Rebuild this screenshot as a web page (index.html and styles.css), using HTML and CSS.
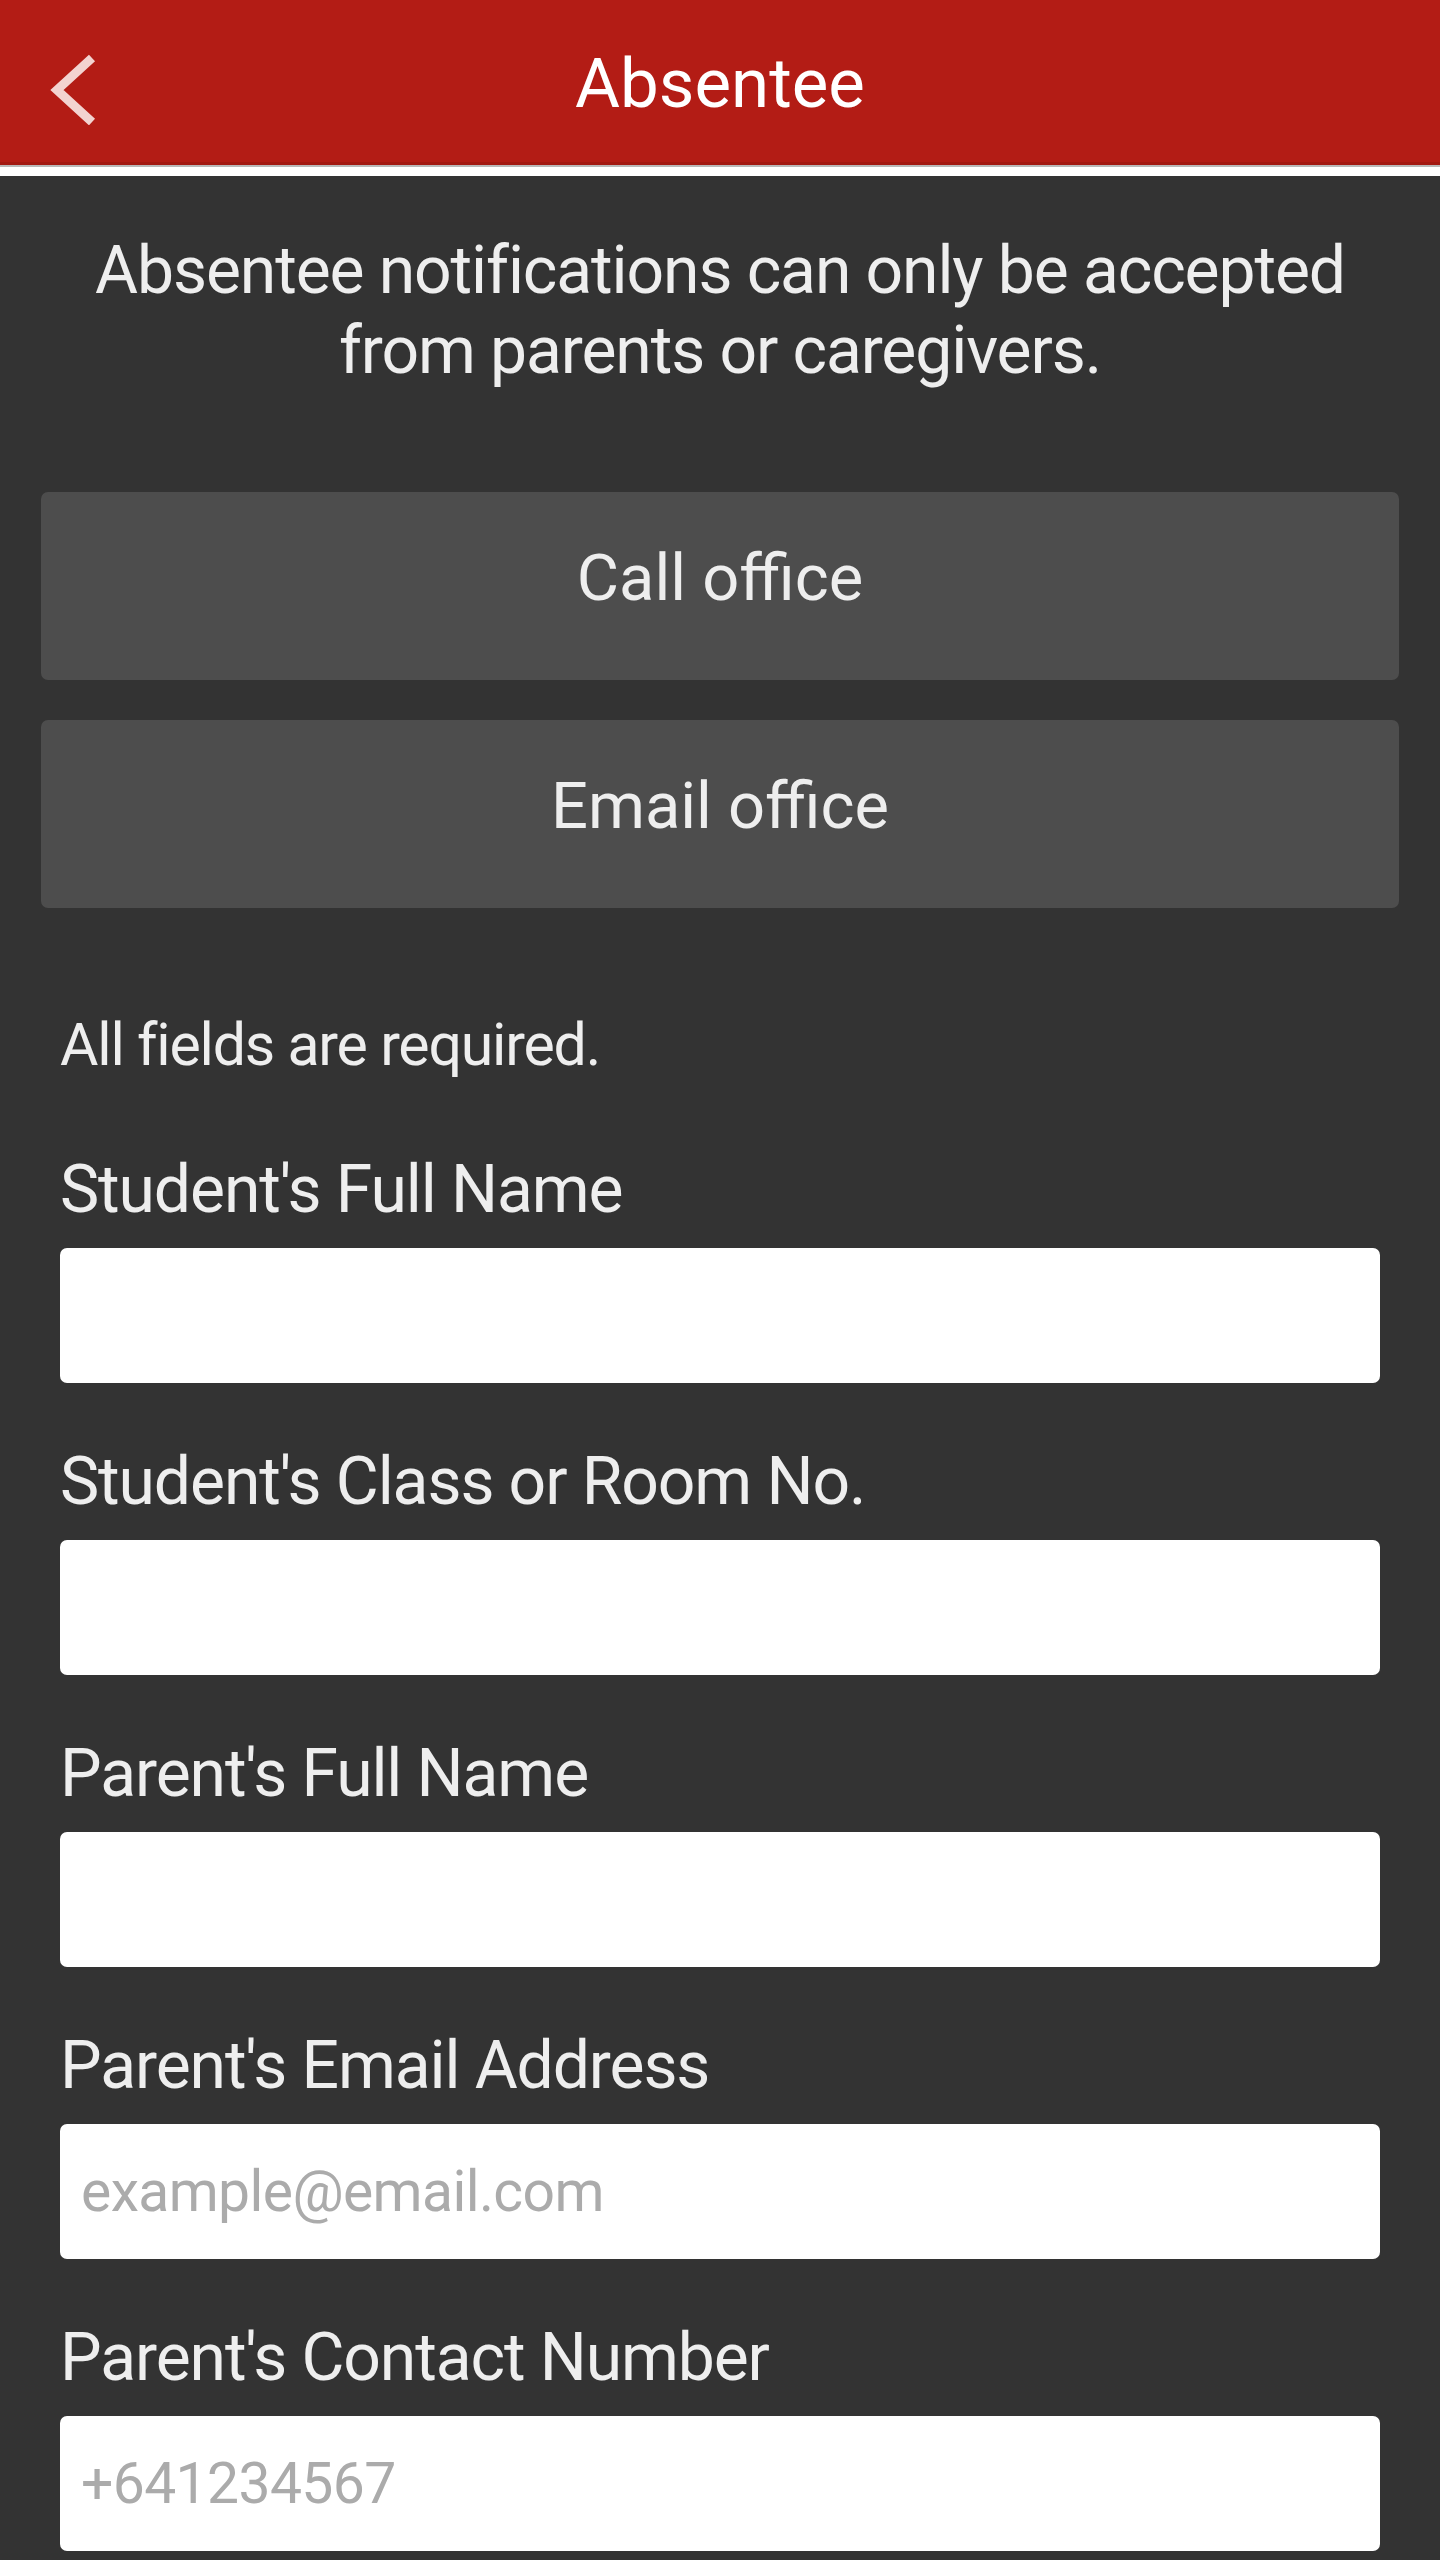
FILE: index.html
```html
<!DOCTYPE html>
<html lang="en">
<head>
<meta charset="utf-8">
<title>Absentee</title>
<link rel="stylesheet" href="styles.css">
</head>
<body>
<header class="topbar">
  <button class="back" type="button" aria-label="Back">
    <svg width="60" height="80" viewBox="0 0 60 80"><polyline points="42,13 7,45 42,77" fill="none" stroke="#f3d3d0" stroke-width="9"/></svg>
  </button>
  <h1 class="title">Absentee</h1>
</header>
<div class="rule"></div>
<main class="content">
  <p class="intro">Absentee notifications can only be accepted from parents or caregivers.</p>
  <div class="actions">
    <button class="action" type="button">Call office</button>
    <button class="action" type="button">Email office</button>
  </div>
  <form class="form">
    <p class="note">All fields are required.</p>
    <div class="field">
      <label class="label">Student's Full Name</label>
      <div class="input"></div>
    </div>
    <div class="field">
      <label class="label">Student's Class or Room No.</label>
      <div class="input"></div>
    </div>
    <div class="field">
      <label class="label">Parent's Full Name</label>
      <div class="input"></div>
    </div>
    <div class="field">
      <label class="label">Parent's Email Address</label>
      <div class="input"><span class="placeholder">example@email.com</span></div>
    </div>
    <div class="field">
      <label class="label">Parent's Contact Number</label>
      <div class="input"><span class="placeholder">+641234567</span></div>
    </div>
  </form>
</main>
</body>
</html>
```
FILE: styles.css
```css
* { box-sizing: border-box; }
html, body { margin: 0; padding: 0; }
body {
  background: #333333;
  font-family: Roboto, "Liberation Sans", sans-serif;
  color: #eeeeee;
  width: 1440px;
  min-height: 2560px;
}
.topbar {
  position: relative;
  height: 165px;
  background: #b31c15;
  border-bottom: 3px solid #a31912;
}
.back {
  position: absolute;
  left: 50px;
  top: 40px;
  width: 60px;
  height: 90px;
  padding: 0;
  border: 0;
  background: none;
}
.back svg { display: block; }
.title {
  margin: 0;
  padding-top: 6px;
  text-align: center;
  font-weight: 400;
  font-size: 69px;
  line-height: 156px;
  color: #ffffff;
}
.rule {
  height: 11px;
  background: #ffffff;
  border-top: 2px solid #b9b9b9;
}
.content {
  padding-top: 55px;
}
.intro {
  margin: 0;
  padding: 0 70px;
  text-align: center;
  font-size: 66px;
  line-height: 80px;
  letter-spacing: -1.1px;
}
.actions {
  display: flex;
  flex-direction: column;
  gap: 40px;
  padding: 0 41px;
  margin-top: 101px;
}
.action {
  height: 188px;
  padding: 0 0 16px;
  border: 0;
  border-radius: 7px;
  background: #4d4d4d;
  color: #eeeeee;
  font-family: Roboto, "Liberation Sans", sans-serif;
  font-size: 65px;
  line-height: 172px;
}
.form {
  padding: 0 60px;
  margin-top: 97px;
}
.note {
  margin: 0 0 65px;
  font-size: 59px;
  line-height: 80px;
  letter-spacing: -1.2px;
}
.field {
  display: flex;
  flex-direction: column;
  margin-bottom: 59px;
}
.label {
  font-size: 66px;
  line-height: 80px;
  letter-spacing: -1.1px;
}
.input {
  margin-top: 18px;
  height: 135px;
  background: #ffffff;
  border-radius: 7px;
  padding-left: 21px;
  font-size: 57px;
  line-height: 135px;
  letter-spacing: -0.6px;
}
.placeholder {
  color: #ababab;
}
```
